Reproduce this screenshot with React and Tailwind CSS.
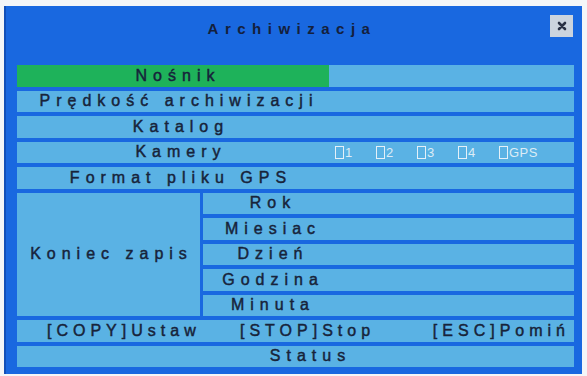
import React from 'react';

const font = { fontFamily: '"Liberation Sans", Arial, sans-serif' };

// one light strip of the OSD menu
const Row = ({ children, className = '', tight = false }) => (
  <div className={`h-[21.5px] bg-[#5ab2e4] flex items-center text-[16px] text-[#17233a] leading-none [-webkit-text-stroke:0.45px_#17233a] ${tight ? 'tracking-[5px]' : 'tracking-[6px]'} ${className}`}>
    {children}
  </div>
);

const Check = ({ label }) => (
  <div className="w-[41px] flex items-center text-[13px] tracking-[0.5px] text-[#dcecf6] [-webkit-text-stroke:0px]">
    <span className="w-[9px] h-[13px] border border-[#e4f0f8] mr-[1px]"></span>
    {label}
  </div>
);

const App = () => {
  const subRows = ['Rok', 'Miesiac', 'Dzień', 'Godzina', 'Minuta'];

  return (
    <div className="w-[587px] h-[376px] bg-[#f4f6f8] pt-[6px] pl-[4px] pr-[5px] pb-[2px]" style={font}>
      <div className="h-full bg-[#1968e0] border-l-2 border-[#1250b8] flex flex-col">
        {/* header */}
        <div className="relative h-[59px] shrink-0 flex justify-center pt-[12px]">
          <span className="text-[15px] font-bold tracking-[6.5px] text-[#14203c] pr-[4px]">Archiwizacja</span>
          <div className="absolute right-[9px] top-[9px] w-[23px] h-[22px] bg-[#ccd4de] flex items-center justify-center">
            <svg width="10" height="10" viewBox="0 0 10 10">
              <path d="M2 2 L8 8 M8 2 L2 8" stroke="#2a3144" strokeWidth="2.6" strokeLinecap="round" />
            </svg>
          </div>
        </div>

        {/* menu rows */}
        <div className="flex flex-col gap-[4px] pl-[11px] pr-[8px]">
          <Row>
            <div className="w-[312px] h-full bg-[#1eb25a] flex items-center justify-center pl-[10px]">Nośnik</div>
          </Row>
          <Row>
            <div className="w-[322px] text-center pl-[2px]">Prędkość archiwizacji</div>
          </Row>
          <Row>
            <div className="w-[322px] text-center pl-[6px]">Katalog</div>
          </Row>
          <Row>
            <div className="w-[318px] text-center pl-[10px]">Kamery</div>
            <div className="flex">
              <Check label="1" />
              <Check label="2" />
              <Check label="3" />
              <Check label="4" />
              <Check label="GPS" />
            </div>
          </Row>
          <Row>
            <div className="w-[322px] text-center pl-[6px]">Format pliku GPS</div>
          </Row>

          <div className="flex gap-[3px] h-[123.5px]">
            <div className="w-[183px] bg-[#5ab2e4] flex items-center justify-center text-[16px] tracking-[6px] text-[#17233a] pl-[6px] [-webkit-text-stroke:0.45px_#17233a]">
              Koniec zapis
            </div>
            <div className="flex-1 flex flex-col gap-[4px]">
              {subRows.map((s) => (
                <Row key={s}>
                  <div className="w-[136px] text-center pl-[4px]">{s}</div>
                </Row>
              ))}
            </div>
          </div>

          <Row tight className="pl-[30px] pr-[4px]">
            <span className="w-[193px]">[COPY]Ustaw</span>
            <span className="flex-1">[STOP]Stop</span>
            <span>[ESC]Pomiń</span>
          </Row>
          <Row className="justify-center pl-[30px]">Status</Row>
        </div>
      </div>
    </div>
  );
};

export default App;
